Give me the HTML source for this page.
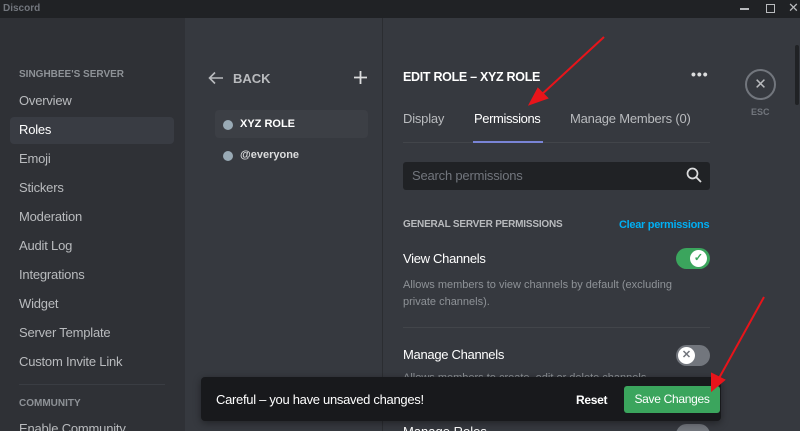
<!DOCTYPE html>
<html><head><style>
*{margin:0;padding:0;box-sizing:border-box}
html,body{width:800px;height:431px;overflow:hidden}
body{background:#36393f;font-family:"Liberation Sans",sans-serif;color:#dcddde}
#w{position:relative;width:800px;height:431px;overflow:hidden}
.a{position:absolute;white-space:nowrap}
.nav{font-size:13px;color:#b9bbbe;left:19px;letter-spacing:-0.2px}
</style></head><body><div id="w">
<div class="a" style="left:0;top:0;width:800px;height:18px;background:#202225"></div>
<div class="a" style="left:3px;top:3px;font-size:10px;font-weight:bold;color:#72767d">Discord</div>
<div class="a" style="left:740px;top:8px;width:9px;height:2px;background:#b9bbbe"></div>
<div class="a" style="left:766px;top:4px;width:9px;height:9px;border:1.5px solid #b9bbbe"></div>
<div class="a" style="left:788px;top:0px;font-size:13px;color:#b9bbbe">✕</div>
<div class="a" style="left:0;top:18px;width:185px;height:413px;background:#2f3136"></div>
<div class="a" style="left:382px;top:18px;width:1px;height:413px;background:#2b2d31"></div>
<div class="a" style="left:795px;top:45px;width:4px;height:60px;background:#202225;border-radius:2px"></div>
<div class="a" style="left:19px;top:69px;font-size:10px;font-weight:bold;color:#8e9297">SINGHBEE'S SERVER</div>
<div class="a" style="left:10px;top:117px;width:164px;height:27px;background:#393c43;border-radius:4px"></div>
<div class="a nav" style="top:93px">Overview</div>
<div class="a nav" style="top:122px;color:#fff">Roles</div>
<div class="a nav" style="top:151px">Emoji</div>
<div class="a nav" style="top:180px">Stickers</div>
<div class="a nav" style="top:209px">Moderation</div>
<div class="a nav" style="top:238px">Audit Log</div>
<div class="a nav" style="top:267px">Integrations</div>
<div class="a nav" style="top:296px">Widget</div>
<div class="a nav" style="top:325px">Server Template</div>
<div class="a nav" style="top:354px">Custom Invite Link</div>
<div class="a" style="left:19px;top:384px;width:146px;height:1px;background:#3a3d43"></div>
<div class="a" style="left:19px;top:398px;font-size:10px;font-weight:bold;color:#8e9297">COMMUNITY</div>
<div class="a nav" style="top:421px">Enable Community</div>

<svg class="a" style="left:208px;top:71px" width="16" height="14"><path d="M15 7H2M7 1.5L1.5 7 7 12.5" fill="none" stroke="#b9bbbe" stroke-width="1.6"/></svg>
<div class="a" style="left:233px;top:71px;font-size:13px;font-weight:bold;color:#b9bbbe">BACK</div>
<svg class="a" style="left:354px;top:71px" width="13" height="13"><path d="M6.5 0v13M0 6.5h13" stroke="#dcddde" stroke-width="1.8"/></svg>
<div class="a" style="left:215px;top:110px;width:153px;height:28px;background:#3c3f45;border-radius:4px"></div>
<div class="a" style="left:223px;top:120px;width:10px;height:10px;border-radius:50%;background:#99aab5"></div>
<div class="a" style="left:240px;top:118px;font-size:11px;font-weight:bold;color:#fff">XYZ ROLE</div>
<div class="a" style="left:223px;top:151px;width:10px;height:10px;border-radius:50%;background:#99aab5"></div>
<div class="a" style="left:240px;top:149px;font-size:11px;font-weight:bold;color:#dcddde">@everyone</div>

<div class="a" style="left:403px;top:70px;font-size:12.5px;font-weight:bold;color:#fff;letter-spacing:-0.3px">EDIT ROLE – XYZ ROLE</div>
<div class="a" style="left:691px;top:66px;font-size:14px;font-weight:bold;color:#dcddde;letter-spacing:1px">•••</div>
<div class="a" style="left:745px;top:69px;width:31px;height:31px;border:2px solid #72767d;border-radius:50%;color:#b9bbbe;font-size:15px;text-align:center;line-height:27px">✕</div>
<div class="a" style="left:751px;top:107px;font-size:9px;font-weight:bold;color:#72767d">ESC</div>
<div class="a" style="left:403px;top:111px;font-size:13px;color:#b9bbbe;letter-spacing:-0.2px">Display</div>
<div class="a" style="left:474px;top:111px;font-size:13px;color:#fff;letter-spacing:-0.4px">Permissions</div>
<div class="a" style="left:570px;top:111px;font-size:13px;color:#b9bbbe;letter-spacing:-0.2px">Manage Members (0)</div>
<div class="a" style="left:403px;top:142px;width:307px;height:1px;background:#42454a"></div>
<div class="a" style="left:473px;top:141px;width:70px;height:2px;background:#7984d6"></div>
<div class="a" style="left:403px;top:162px;width:307px;height:28px;background:#202225;border-radius:3px"></div>
<div class="a" style="left:412px;top:168px;font-size:13px;color:#72767d;letter-spacing:-0.2px">Search permissions</div>
<svg class="a" style="left:686px;top:167px" width="16" height="16"><circle cx="6.5" cy="6.5" r="5" fill="none" stroke="#dcddde" stroke-width="1.7"/><path d="M10 10l5 5" stroke="#dcddde" stroke-width="1.8"/></svg>
<div class="a" style="left:403px;top:219px;font-size:10px;font-weight:bold;color:#b9bbbe;letter-spacing:-0.2px">GENERAL SERVER PERMISSIONS</div>
<div class="a" style="left:619px;top:219px;font-size:11px;font-weight:bold;color:#00aff4;letter-spacing:-0.3px">Clear permissions</div>
<div class="a" style="left:403px;top:251px;font-size:13px;color:#fff;letter-spacing:-0.3px">View Channels</div>
<div class="a" style="left:676px;top:248px;width:34px;height:21px;border-radius:11px;background:#3ba55d"></div>
<div class="a" style="left:690px;top:250px;width:17px;height:17px;border-radius:50%;background:#fff;color:#3ba55d;font-size:11px;font-weight:bold;text-align:center;line-height:17px">✓</div>
<div class="a" style="left:403px;top:277px;font-size:11px;line-height:17px;color:#8e9297">Allows members to view channels by default (excluding<br>private channels).</div>
<div class="a" style="left:403px;top:327px;width:307px;height:1px;background:#42454a"></div>
<div class="a" style="left:403px;top:347px;font-size:13px;color:#fff;letter-spacing:-0.3px">Manage Channels</div>
<div class="a" style="left:676px;top:345px;width:34px;height:21px;border-radius:11px;background:#72767d"></div>
<div class="a" style="left:678px;top:347px;width:17px;height:17px;border-radius:50%;background:#fff;color:#72767d;font-size:11px;font-weight:bold;text-align:center;line-height:17px">✕</div>
<div class="a" style="left:403px;top:372px;font-size:11px;color:#8e9297">Allows members to create, edit or delete channels.</div>
<div class="a" style="left:403px;top:424px;font-size:13px;color:#fff">Manage Roles</div>
<div class="a" style="left:676px;top:424px;width:34px;height:21px;border-radius:11px;background:#72767d"></div>

<div class="a" style="left:201px;top:377px;width:520px;height:44px;background:#18191c;border-radius:4px;box-shadow:0 2px 8px rgba(0,0,0,.4)"></div>
<div class="a" style="left:216px;top:392px;font-size:13px;color:#fff;letter-spacing:-0.3px">Careful – you have unsaved changes!</div>
<div class="a" style="left:576px;top:393px;font-size:12px;font-weight:bold;color:#fff;letter-spacing:-0.3px">Reset</div>
<div class="a" style="left:624px;top:386px;width:96px;height:27px;background:#3ba55d;border-radius:3px;color:#fff;font-size:12px;text-align:center;line-height:27px;letter-spacing:-0.3px">Save Changes</div>

<svg class="a" style="left:0;top:0" width="800" height="431"><g stroke="#e8141a" stroke-width="2" fill="#e8141a">
<line x1="604" y1="37" x2="540" y2="96"/><polygon points="530,104 538,89 547,98"/>
<line x1="764" y1="297" x2="718" y2="380"/><polygon points="712,390 712,374 724,380"/></g></svg>
</div></body></html>
